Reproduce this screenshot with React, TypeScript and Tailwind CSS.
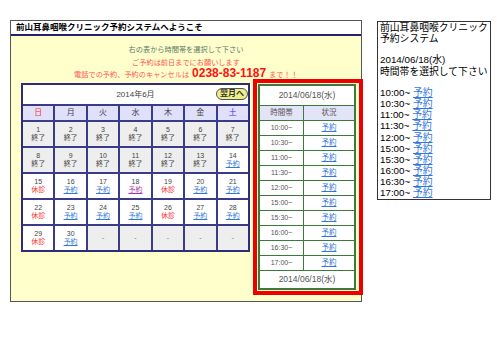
import React from "react";

type Day = { n: number | null; s: "end" | "open" | "off" | "today" | "none" };

const weeks: Day[][] = [
  [1, 2, 3, 4, 5, 6, 7].map((n) => ({ n, s: "end" as const })),
  [
    ...[8, 9, 10, 11, 12, 13].map((n) => ({ n, s: "end" as const })),
    { n: 14, s: "open" },
  ],
  [
    { n: 15, s: "off" },
    { n: 16, s: "open" },
    { n: 17, s: "open" },
    { n: 18, s: "today" },
    { n: 19, s: "off" },
    { n: 20, s: "open" },
    { n: 21, s: "open" },
  ],
  [
    { n: 22, s: "off" },
    { n: 23, s: "open" },
    { n: 24, s: "open" },
    { n: 25, s: "open" },
    { n: 26, s: "off" },
    { n: 27, s: "open" },
    { n: 28, s: "open" },
  ],
  [
    { n: 29, s: "off" },
    { n: 30, s: "open" },
    ...Array.from({ length: 5 }, () => ({ n: null, s: "none" as const })),
  ],
];

const times = [
  "10:00",
  "10:30",
  "11:00",
  "11:30",
  "12:00",
  "15:00",
  "15:30",
  "16:00",
  "16:30",
  "17:00",
];

const dows = [
  { t: "日", c: "text-[#ff3333]" },
  { t: "月", c: "text-[#444]" },
  { t: "火", c: "text-[#444]" },
  { t: "水", c: "text-[#444]" },
  { t: "木", c: "text-[#444]" },
  { t: "金", c: "text-[#444]" },
  { t: "土", c: "text-[#3333ff]" },
];

function DayCell({ d }: { d: Day }) {
  if (d.s === "none") {
    return (
      <div className="bg-[#eeeeee] h-[24px] flex items-center justify-center text-[7px] text-[#777]">
        -
      </div>
    );
  }
  const bg = d.s === "end" ? "bg-[#eeeeee]" : "bg-white";
  return (
    <div
      className={`${bg} h-[24px] flex flex-col items-center justify-center leading-[8px] text-[7px]`}
    >
      <span className="text-[#444]">{d.n}</span>
      {d.s === "end" && <span className="text-[#444]">終了</span>}
      {d.s === "open" && (
        <span className="text-[#3377dd] underline">予約</span>
      )}
      {d.s === "today" && (
        <span className="text-[#aa33aa] underline">予約</span>
      )}
      {d.s === "off" && <span className="text-[#ff3333]">休診</span>}
    </div>
  );
}

export default function App() {
  return (
    <div
      className="w-[497px] h-[346px] bg-white overflow-hidden"
      style={{ fontFamily: '"Liberation Sans", "Noto Sans CJK JP", sans-serif' }}
    >
      <div className="flex items-start pt-[20px] pl-[10px]">
        {/* main panel */}
        <div className="w-[352px] h-[282px] border border-[#555] bg-[#ffffcc] flex flex-col">
          <div className="h-[15px] bg-white border-b-2 border-[#22226e] px-[5px] flex items-center text-[8.5px] font-bold text-black">
            前山耳鼻咽喉クリニック予約システムへようこそ
          </div>

          <div className="flex flex-col items-center pt-[8px] text-[7.2px] leading-[11px]">
            <p className="text-[#5a7a6a] mb-[2px]">右の表から時間帯を選択して下さい</p>
            <p className="text-[#ff5555]">ご予約は前日までにお願いします</p>
            <p className="text-[#ff5555] flex items-baseline leading-[11px]">
              電話での予約、予約のキャンセルは
              <span className="text-[12px] font-bold text-[#ff1111] mx-[3px]">
                0238-83-1187
              </span>
              まで！！
            </p>
          </div>

          <div className="flex items-start pl-[10px] pt-[3px] gap-[8px]">
            {/* calendar */}
            <div className="w-[229px] border-2 border-[#2d2d7a] bg-white">
              <div className="h-[19px] relative flex items-center justify-center text-[8px] text-[#444]">
                2014年6月
                <span className="absolute right-0 top-[3px] h-[12px] px-[3px] rounded-full bg-[#eeee88] border border-[#555] text-[8px] font-bold text-[#333] flex items-center">
                  翌月へ
                </span>
              </div>
              <div className="grid grid-cols-7 gap-[2px] bg-[#3b3b8a] pt-[2px]">
                {dows.map((d) => (
                  <div
                    key={d.t}
                    className={`bg-[#e0e0fa] h-[14px] flex items-center justify-center text-[8px] ${d.c}`}
                  >
                    {d.t}
                  </div>
                ))}
                {weeks.flat().map((d, i) => (
                  <DayCell key={i} d={d} />
                ))}
              </div>
            </div>

            {/* time table */}
            <div className="relative mt-[1px]">
              <div className="w-[98px] border-2 border-[#3a7a3a] bg-white text-[#555]">
                <div className="h-[19px] flex items-center justify-center text-[8.5px]">
                  2014/06/18(水)
                </div>
                <div className="flex h-[15px] border-t-[1.5px] border-[#3a7a3a] bg-[#e4e4f8] text-[7.5px]">
                  <div className="w-[44px] border-r-[1.5px] border-[#3a7a3a] flex items-center justify-center">
                    時間帯
                  </div>
                  <div className="flex-1 flex items-center justify-center">状況</div>
                </div>
                {times.map((t) => (
                  <div
                    key={t}
                    className="flex h-[15px] border-t-[1.5px] border-[#3a7a3a] text-[7px]"
                  >
                    <div className="w-[44px] border-r-[1.5px] border-[#3a7a3a] flex items-center justify-center">
                      {t}~
                    </div>
                    <div className="flex-1 flex items-center justify-center text-[7.5px] text-[#3377dd] underline">
                      予約
                    </div>
                  </div>
                ))}
                <div className="h-[18px] border-t-[1.5px] border-[#3a7a3a] flex items-center justify-center text-[8.5px]">
                  2014/06/18(水)
                </div>
              </div>
              {/* red highlight frame */}
              <div className="absolute -left-[5px] -top-[5px] -right-[7px] -bottom-[5px] border-4 border-[#ee0000] pointer-events-none" />
            </div>
          </div>
        </div>

        {/* mobile view */}
        <div className="ml-[15px] mt-[1px] w-[114px] border border-[#333] px-[2px] text-[9.8px] text-black whitespace-nowrap">
          <p className="h-[11.2px] leading-[11.2px]">前山耳鼻咽喉クリニック</p>
          <p className="h-[11.2px] leading-[11.2px]">予約システム</p>
          <div className="h-[10px]" />
          <p className="h-[11.2px] leading-[11.2px]">2014/06/18(水)</p>
          <p className="h-[11.2px] leading-[11.2px]">時間帯を選択して下さい</p>
          <div className="h-[10px]" />
          {times.map((t) => (
            <p key={t} className="h-[11.2px] leading-[11.2px]">
              {t}~ <span className="text-[#3377dd] underline">予約</span>
            </p>
          ))}
        </div>
      </div>
    </div>
  );
}
